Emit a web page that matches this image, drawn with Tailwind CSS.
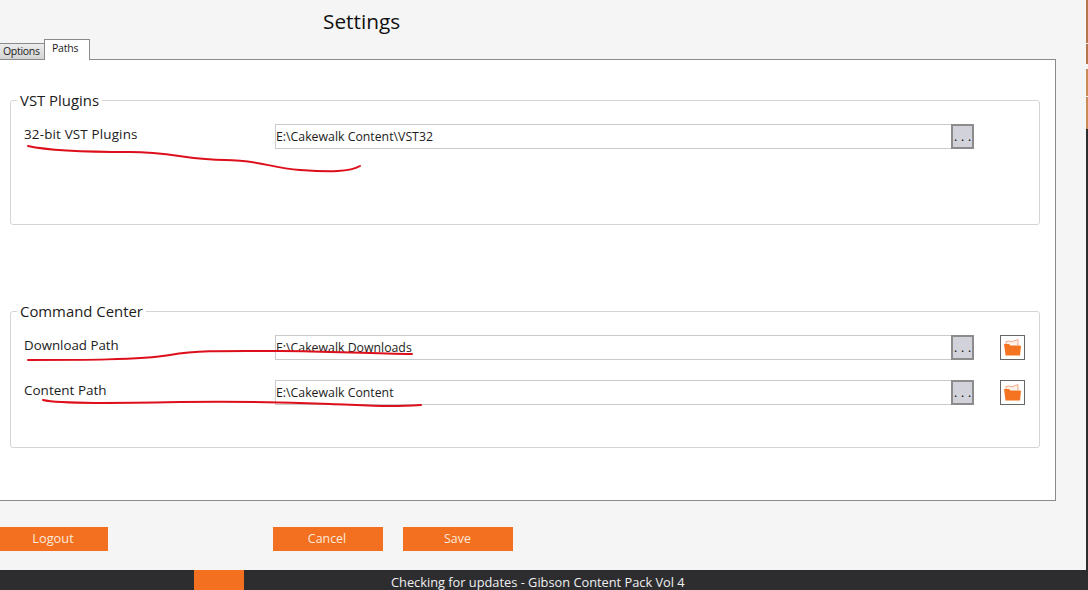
<!DOCTYPE html>
<html lang="en">
<head>
    <meta charset="UTF-8">
    <script src="https://cdn.jsdelivr.net/npm/@tailwindcss/browser@4"></script>
    <title>Settings</title>
</head>
<body class="relative w-[1088px] h-[590px] overflow-hidden bg-[#f5f5f5] font-['Open_Sans',sans-serif] text-[#1c1c1c]">

<div class="absolute top-0 right-0 w-[2px] h-full flex flex-col">
    <div class="h-[43px] bg-[#b5774a]"></div>
    <div class="h-[20px] mt-px bg-[#b5774a]"></div>
    <div class="h-[27px] mt-[5px] bg-[#c98a55]"></div>
    <div class="h-[32px] mt-px bg-[#c98a55]"></div>
    <div class="flex-1 bg-[#2d2d30]"></div>
</div>

<h1 class="h-[39px] pl-[323px] pt-[6px] text-[20.8px] leading-[30px] text-[#111]">Settings</h1>

<div class="flex items-end h-[21px] -mb-px relative z-10">
    <div class="w-[45px] h-[17px] bg-linear-to-b from-[#ececec] to-[#d4d4d4] border border-[#8a8a8a] border-l-0 text-[10.5px] leading-[15px] pl-[3px] tracking-[-0.3px]">Options</div>
    <div class="w-[46px] h-[21px] -ml-px bg-white border border-b-0 border-[#8a8a8a] text-[10.5px] leading-[17px] pl-[7px] tracking-[-0.2px]">Paths</div>
</div>

<div class="w-[1056px] h-[442px] bg-white border border-l-0 border-[#8a8a8a] pt-[30px] pl-[10px]">
    <fieldset class="w-[1030px] h-[135px] border border-[#d5d5d5] rounded-[3px] pl-[6px]">
        <legend class="px-[3px] text-[14.9px] leading-[20px]">VST Plugins</legend>
        <div class="flex flex-col gap-5 pt-[14px]">
            <div class="flex items-start h-[25px]">
                <span class="w-[258px] pl-[7px] text-[13.4px] leading-[20px] tracking-[0.17px]">32-bit VST Plugins</span>
                <div class="flex w-[699px] h-[25px] bg-white border border-[#cacaca]">
                    <span class="flex-1 text-[12.3px] leading-[23px]">E:\Cakewalk Content\VST32</span>
                    <button class="w-[23px] h-[25px] -mt-px -mr-px bg-[#d2d2da] border-2 border-[#8c8c8c] text-[12px] leading-[22px] tracking-[3.8px] pl-[1px] text-black">...</button>
                </div>
            </div>
        </div>
    </fieldset>

    <fieldset class="w-[1030px] h-[147px] mt-[76px] border border-[#d5d5d5] rounded-[3px] pl-[6px]">
        <legend class="px-[3px] text-[14.9px] leading-[20px]">Command Center</legend>
        <div class="flex flex-col gap-5 pt-[14px]">
            <div class="flex items-start h-[25px]">
                <span class="w-[258px] pl-[7px] text-[13.3px] leading-[20px]">Download Path</span>
                <div class="flex w-[699px] h-[25px] bg-white border border-[#cacaca]">
                    <span class="flex-1 text-[12.3px] leading-[23px]">E:\Cakewalk Downloads</span>
                    <button class="w-[23px] h-[25px] -mt-px -mr-px bg-[#d2d2da] border-2 border-[#8c8c8c] text-[12px] leading-[22px] tracking-[3.8px] pl-[1px] text-black">...</button>
                </div>
                <button class="w-[25px] h-[25px] ml-[26px] flex items-center justify-center bg-white border border-[#666]">
                    <svg width="19" height="17" viewBox="0 0 19 17"><path d="M3 5V2.500L7 2l1 1 7-2.500V6" fill="#fdf1e6" stroke="#f6a889"/><path d="M1 5h5l1.500 1.500H17l1 .5-1 9.500H2.500z" fill="#f47421"/></svg>
                </button>
            </div>
            <div class="flex items-start h-[25px]">
                <span class="w-[258px] pl-[7px] text-[13.5px] leading-[20px]">Content Path</span>
                <div class="flex w-[699px] h-[25px] bg-white border border-[#cacaca]">
                    <span class="flex-1 text-[12.3px] leading-[23px]">E:\Cakewalk Content</span>
                    <button class="w-[23px] h-[25px] -mt-px -mr-px bg-[#d2d2da] border-2 border-[#8c8c8c] text-[12px] leading-[22px] tracking-[3.8px] pl-[1px] text-black">...</button>
                </div>
                <button class="w-[25px] h-[25px] ml-[26px] flex items-center justify-center bg-white border border-[#666]">
                    <svg width="19" height="17" viewBox="0 0 19 17"><path d="M3 5V2.500L7 2l1 1 7-2.500V6" fill="#fdf1e6" stroke="#f6a889"/><path d="M1 5h5l1.500 1.500H17l1 .5-1 9.500H2.500z" fill="#f47421"/></svg>
                </button>
            </div>
        </div>
    </fieldset>
</div>

<div class="flex h-[69px] pt-[26px] text-[12.4px] text-[#fbe9dc]">
    <button class="w-[108px] h-[24px] pr-[2px] bg-[#f37021] text-[12.8px]">Logout</button>
    <button class="w-[110px] h-[24px] ml-[165px] pr-[2px] bg-[#f37021]">Cancel</button>
    <button class="w-[110px] h-[24px] ml-[20px] pr-px bg-[#f37021]">Save</button>
</div>

<div class="flex h-[20px] w-[1086px] bg-[#2d2d30] text-[12.8px] leading-[25px] text-[#f0f0f0]">
    <div class="w-[50px] ml-[194px] bg-[#f37021]"></div>
    <span class="ml-[147px]">Checking for updates - Gibson Content Pack Vol 4</span>
</div>

<!-- hand drawn red marks on top of the screenshot -->
<svg class="absolute top-0 left-0 pointer-events-none" width="1088" height="590" fill="none" stroke="#dc0f1a" stroke-width="2" stroke-linecap="round">
    <path d="M28 146C50 151 90 152 130 152S190 160 225 160 270 168 300 170 350 172 360 166"/>
    <path d="M28 360C80 360 140 360 170 355S230 351 280 351 370 354 412 354"/>
    <path d="M43 400C60 404 120 403 180 402S280 402 330 404 390 407 421 405"/>
</svg>
</body>
</html>
